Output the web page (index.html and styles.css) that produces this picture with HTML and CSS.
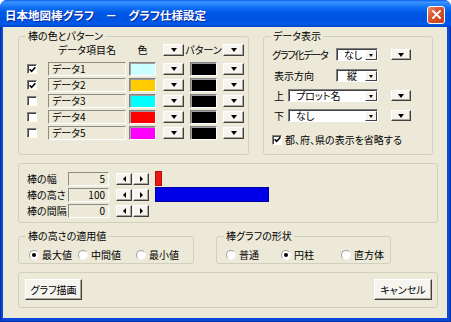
FILE: index.html
```html
<!DOCTYPE html>
<html lang="ja">
<head>
    <meta charset="UTF-8">
    <title>グラフ仕様設定</title>
    <link rel="stylesheet" href="styles.css">
</head>
<body>
    <div class="window">
        <div class="titlebar">
            <span class="title">日本地図棒グラフ　－　グラフ仕様設定</span>
            <span class="close-btn">
                <svg width="9" height="9" viewBox="0 0 9 9"><path d="M1 1L8 8M8 1L1 8" stroke="#fff" stroke-width="1.8" stroke-linecap="round"/></svg>
            </span>
        </div>
        <div class="frame">
            <div class="client">
                <div class="top-row">
                    <fieldset class="group pattern-group">
                        <legend>棒の色とパターン</legend>
                        <div class="series">
                            <div class="series-head">
                                <span class="check-space"></span>
                                <span class="head-name">データ項目名</span>
                                <span class="head-color">色</span>
                                <span class="drop-btn"></span>
                                <span class="head-pattern">パターン</span>
                                <span class="drop-btn"></span>
                            </div>
                            <div class="series-rows">
                                <div class="series-row">
                                    <span class="check checked"><svg width="7" height="7" viewBox="0 0 7 7"><path d="M0.6 3.2L2.6 5.3L6.4 1.2" stroke="#000" stroke-width="1.5" fill="none"/></svg></span>
                                    <span class="name-field">データ1</span>
                                    <span class="swatch swatch-1"></span>
                                    <span class="drop-btn"></span>
                                    <span class="swatch swatch-pattern"></span>
                                    <span class="drop-btn"></span>
                                </div>
                                <div class="series-row">
                                    <span class="check checked"><svg width="7" height="7" viewBox="0 0 7 7"><path d="M0.6 3.2L2.6 5.3L6.4 1.2" stroke="#000" stroke-width="1.5" fill="none"/></svg></span>
                                    <span class="name-field">データ2</span>
                                    <span class="swatch swatch-2"></span>
                                    <span class="drop-btn"></span>
                                    <span class="swatch swatch-pattern"></span>
                                    <span class="drop-btn"></span>
                                </div>
                                <div class="series-row">
                                    <span class="check"></span>
                                    <span class="name-field">データ3</span>
                                    <span class="swatch swatch-3"></span>
                                    <span class="drop-btn"></span>
                                    <span class="swatch swatch-pattern"></span>
                                    <span class="drop-btn"></span>
                                </div>
                                <div class="series-row">
                                    <span class="check"></span>
                                    <span class="name-field">データ4</span>
                                    <span class="swatch swatch-4"></span>
                                    <span class="drop-btn"></span>
                                    <span class="swatch swatch-pattern"></span>
                                    <span class="drop-btn"></span>
                                </div>
                                <div class="series-row">
                                    <span class="check"></span>
                                    <span class="name-field">データ5</span>
                                    <span class="swatch swatch-5"></span>
                                    <span class="drop-btn"></span>
                                    <span class="swatch swatch-pattern"></span>
                                    <span class="drop-btn"></span>
                                </div>
                            </div>
                        </div>
                    </fieldset>

                    <fieldset class="group display-group">
                        <legend>データ表示</legend>
                        <div class="display-body">
                            <div class="disp-row row-type">
                                <span class="disp-label narrow">グラフ化データ</span>
                                <span class="combo combo-small"><span class="combo-text">なし</span><span class="combo-arrow"></span></span>
                                <span class="drop-btn side-btn"></span>
                            </div>
                            <div class="disp-row row-dir">
                                <span class="disp-label indent">表示方向</span>
                                <span class="combo combo-small"><span class="combo-text center">縦</span><span class="combo-arrow"></span></span>
                            </div>
                            <div class="disp-row row-upper">
                                <span class="disp-label short">上</span>
                                <span class="combo combo-long"><span class="combo-text">プロット名</span><span class="combo-arrow"></span></span>
                                <span class="drop-btn side-btn"></span>
                            </div>
                            <div class="disp-row row-lower">
                                <span class="disp-label short">下</span>
                                <span class="combo combo-long"><span class="combo-text">なし</span><span class="combo-arrow"></span></span>
                                <span class="drop-btn side-btn"></span>
                            </div>
                            <div class="disp-row row-omit">
                                <span class="check checked"><svg width="7" height="7" viewBox="0 0 7 7"><path d="M0.6 3.2L2.6 5.3L6.4 1.2" stroke="#000" stroke-width="1.5" fill="none"/></svg></span>
                                <span class="omit-text">都、府、県の表示を省略する</span>
                            </div>
                        </div>
                    </fieldset>
                </div>

                <div class="panel size-panel">
                    <div class="size-row">
                        <span class="size-label">棒の幅</span>
                        <span class="num-field">5</span>
                        <span class="spin"><span class="spin-btn left"></span><span class="spin-btn right"></span></span>
                        <span class="bar bar-width" style="width: 7px"></span>
                    </div>
                    <div class="size-row">
                        <span class="size-label">棒の高さ</span>
                        <span class="num-field">100</span>
                        <span class="spin"><span class="spin-btn left"></span><span class="spin-btn right"></span></span>
                        <span class="bar bar-height" style="width: 114px"></span>
                    </div>
                    <div class="size-row">
                        <span class="size-label">棒の間隔</span>
                        <span class="num-field">0</span>
                        <span class="spin"><span class="spin-btn left"></span><span class="spin-btn right"></span></span>
                    </div>
                </div>

                <div class="bottom-row">
                    <fieldset class="group height-group">
                        <legend>棒の高さの適用値</legend>
                        <div class="radio-line">
                            <span class="radio-item"><span class="radio on"></span>最大値</span>
                            <span class="radio-item"><span class="radio"></span>中間値</span>
                            <span class="radio-item"><span class="radio"></span>最小値</span>
                        </div>
                    </fieldset>
                    <fieldset class="group shape-group">
                        <legend>棒グラフの形状</legend>
                        <div class="radio-line">
                            <span class="radio-item"><span class="radio"></span>普通</span>
                            <span class="radio-item"><span class="radio on"></span>円柱</span>
                            <span class="radio-item"><span class="radio"></span>直方体</span>
                        </div>
                    </fieldset>
                </div>

                <div class="panel button-panel">
                    <button class="push-btn draw-btn">グラフ描画</button>
                    <button class="push-btn cancel-btn">キャンセル</button>
                </div>
            </div>
        </div>
    </div>
</body>
</html>
```

FILE: styles.css
```css
* {
    box-sizing: border-box;
}
body {
    margin: 0;
    background: #fff;
    color: #000;
    font-family: "Noto Sans CJK JP", "Noto Sans", sans-serif;
    font-size: 10px;
    font-feature-settings: "palt";
}
.window {
    width: 451px;
    height: 322px;
    display: flex;
    flex-direction: column;
    background: #0B47D8;
    border-radius: 7px 7px 0 0;
    overflow: hidden;
}
.titlebar {
    height: 27px;
    flex: none;
    display: flex;
    align-items: center;
    justify-content: space-between;
    padding: 2px 6px 0 5px;
    background: linear-gradient(to bottom, #0A5DE8 0px, #3D95FF 2px, #2A87FC 4px, #0E6CF3 8px, #0058E6 13px, #0054E3 20px, #005AEA 24px, #0043C6 27px);
}
.title {
    color: #fff;
    font-weight: bold;
    font-size: 11.5px;
    text-shadow: 1px 1px 0 #0A2A9C;
}
.close-btn {
    width: 18px;
    height: 18px;
    display: flex;
    align-items: center;
    justify-content: center;
    border: 1px solid #fff;
    border-radius: 3px;
    background: linear-gradient(135deg, #EA9070 0%, #DA5530 40%, #C63E17 100%);
}
.frame {
    flex: 1;
    padding: 0 4px 4px 3px;
    background: #0B47D8;
    box-shadow: inset 1px 0 #0030A8, inset -1px -1px #0030A8;
}
.client {
    height: 100%;
    background: #ECE9D8;
    padding: 3px 0 0 15px;
}

/* group boxes */
.group {
    margin: 0;
    padding: 0;
    min-width: 0;
    border: 1px solid #D0D0BF;
    border-radius: 3px;
}
.group legend {
    margin-left: 7px;
    padding: 0 2px;
    line-height: 12px;
    font-size: 10px;
}
.panel {
    width: 420px;
    border: 1px solid #D0D0BF;
    border-radius: 3px;
}
.top-row {
    display: flex;
    gap: 14px;
    height: 125px;
}
.pattern-group {
    width: 231px;
}
.display-group {
    width: 170px;
}

/* common controls */
.check {
    width: 10px;
    height: 10px;
    flex: none;
    display: flex;
    align-items: center;
    justify-content: center;
    background: #fff;
    border: 1px solid;
    border-color: #808080 #fff #fff #808080;
    box-shadow: inset 1px 1px #404040;
}
.drop-btn {
    width: 21px;
    height: 12px;
    flex: none;
    display: flex;
    align-items: center;
    justify-content: center;
    background: #F5F4EF;
    border: 1px solid;
    border-color: #fff #404040 #404040 #fff;
    box-shadow: inset -1px -1px #ACA899;
}
.drop-btn::after,
.combo-arrow::after {
    content: "";
    border-left: 3px solid transparent;
    border-right: 3px solid transparent;
    border-top: 4px solid #000;
}

/* series table */
.series {
    padding-left: 8px;
}
.series-head {
    display: flex;
    align-items: center;
    height: 12px;
    margin: 2px 0 6px;
}
.check-space {
    width: 10px;
    margin-right: 11px;
}
.head-name,
.head-color,
.head-pattern {
    display: flex;
    justify-content: center;
    white-space: nowrap;
    line-height: 12px;
}
.head-name {
    width: 78px;
}
.head-color {
    width: 27px;
    margin: 0 7px 0 3px;
}
.head-pattern {
    width: 27px;
    margin: 0 6px;
}
.series-rows {
    display: grid;
    row-gap: 2px;
}
.series-row {
    display: flex;
    align-items: center;
    height: 14px;
}
.series-row .check {
    margin-right: 11px;
}
.name-field {
    width: 78px;
    height: 14px;
    line-height: 12px;
    padding-left: 3px;
    border: 1px solid;
    border-color: #8C8C82 #fff #fff #8C8C82;
}
.swatch {
    width: 27px;
    height: 14px;
    border: 1px solid;
    border-color: #808080 #fff #fff #808080;
    box-shadow: inset 1px 1px #A0A0A0;
}
.series-row .swatch-1,
.series-row .swatch-2,
.series-row .swatch-3,
.series-row .swatch-4,
.series-row .swatch-5 {
    margin: 0 7px 0 3px;
}
.series-row .swatch-pattern {
    margin: 0 6px;
}
.swatch-1 { background: #CCFFFF; }
.swatch-2 { background: #FFCC00; }
.swatch-3 { background: #00FFFF; }
.swatch-4 { background: #FF0000; }
.swatch-5 { background: #FF00FF; }
.swatch-pattern { background: #000; }

/* display settings */
.display-body {
    padding-left: 8px;
}
.disp-row {
    display: flex;
    align-items: center;
    height: 13px;
}
.row-type { margin-top: 6px; }
.row-dir { margin-top: 8px; }
.row-upper { margin-top: 7px; }
.row-lower { margin-top: 7px; }
.row-omit { margin-top: 11px; }
.disp-label {
    width: 64px;
    white-space: nowrap;
}
.disp-label.narrow {
    letter-spacing: -1.2px;
}
.disp-label.indent {
    padding-left: 2px;
}
.disp-label.short {
    width: 16px;
    padding-left: 2px;
}
.combo {
    height: 13px;
    display: flex;
    background: #fff;
    border: 1px solid;
    border-color: #808080 #fff #fff #808080;
    box-shadow: inset 1px 1px #404040;
}
.combo-small {
    width: 42px;
}
.combo-long {
    width: 90px;
}
.combo-text {
    flex: 1;
    padding-left: 7px;
    line-height: 11px;
    white-space: nowrap;
}
.combo-text.center {
    padding-left: 10px;
}
.combo-arrow {
    width: 12px;
    margin: 1px 0 0;
    display: flex;
    align-items: center;
    justify-content: center;
    background: #F5F4EF;
    border: 1px solid;
    border-color: #fff #404040 #404040 #fff;
}
.combo-arrow::after {
    border-left-width: 2px;
    border-right-width: 2px;
    border-top-width: 3px;
}
.side-btn {
    width: 20px;
    height: 11px;
    margin-left: 13px;
}
.row-omit .check {
    margin-right: 3px;
}

/* size panel */
.size-panel {
    height: 60px;
    margin-top: 8px;
    padding: 7px 0 0 8px;
}
.size-row {
    display: flex;
    align-items: center;
    height: 15px;
    margin-bottom: 1px;
}
.size-label {
    width: 41px;
    white-space: nowrap;
}
.num-field {
    width: 41px;
    height: 14px;
    line-height: 12px;
    padding-right: 3px;
    text-align: right;
    border: 1px solid;
    border-color: #8C8C82 #fff #fff #8C8C82;
}
.spin {
    display: flex;
    gap: 1px;
    margin-left: 7px;
}
.spin-btn {
    width: 16px;
    height: 12px;
    display: flex;
    align-items: center;
    justify-content: center;
    background: #F5F4EF;
    border: 1px solid;
    border-color: #fff #404040 #404040 #fff;
    box-shadow: inset -1px -1px #ACA899;
}
.spin-btn::after {
    content: "";
    border-top: 3px solid transparent;
    border-bottom: 3px solid transparent;
}
.spin-btn.left::after {
    border-right: 3px solid #000;
}
.spin-btn.right::after {
    border-left: 3px solid #000;
}
.bar {
    height: 15px;
    margin-left: 6px;
}
.bar-width {
    background: #EE1515;
    border: 1px solid #B80A0A;
}
.bar-height {
    background: #0000E8;
    border: 1px solid #00009A;
}

/* radio groups */
.bottom-row {
    display: flex;
    gap: 22px;
    height: 34px;
    margin-top: 7px;
}
.height-group {
    width: 176px;
}
.shape-group {
    width: 175px;
}
.radio-line {
    display: grid;
    align-items: center;
    height: 12px;
    margin-top: 5px;
}
.height-group .radio-line {
    grid-template-columns: 49px 58px auto;
    padding-left: 10px;
}
.shape-group .radio-line {
    grid-template-columns: 55px 60px auto;
    padding-left: 9px;
}
.radio-item {
    display: flex;
    align-items: center;
    gap: 3px;
    white-space: nowrap;
}
.radio {
    width: 10px;
    height: 10px;
    display: flex;
    align-items: center;
    justify-content: center;
    border-radius: 50%;
    background: #fff;
    border: 1px solid;
    border-color: #A0A0A0 #F4F4F4 #F4F4F4 #A0A0A0;
}
.radio.on::after {
    content: "";
    width: 4px;
    height: 4px;
    border-radius: 50%;
    background: #000;
}

/* buttons */
.button-panel {
    height: 36px;
    margin-top: 8px;
    padding: 6px 5px 0 6px;
    display: flex;
    justify-content: space-between;
    align-items: flex-start;
}
.push-btn {
    height: 21px;
    padding: 0;
    font-family: inherit;
    font-size: 10px;
    font-feature-settings: "palt";
    color: #000;
    background: #F5F4EF;
    border: 1px solid;
    border-color: #fff #404040 #404040 #fff;
    box-shadow: inset -1px -1px #ACA899;
}
.draw-btn {
    width: 57px;
}
.cancel-btn {
    width: 58px;
}
```
